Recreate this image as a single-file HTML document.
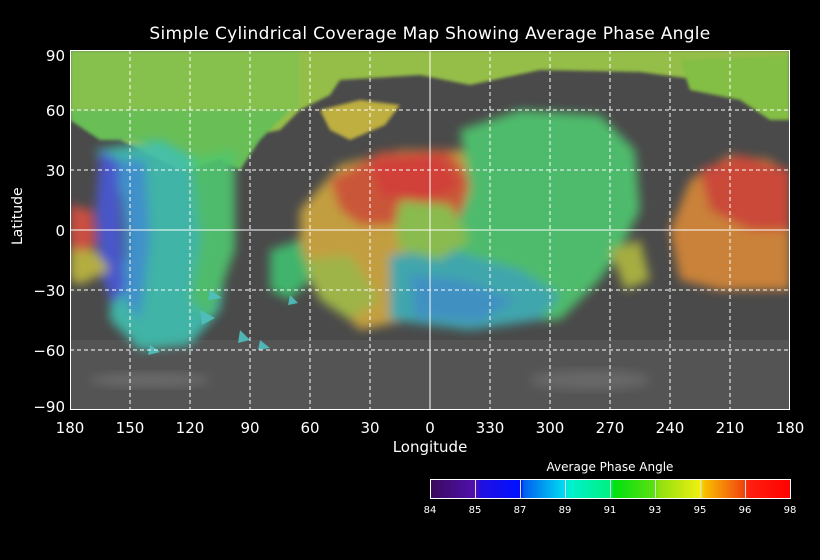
<!DOCTYPE html>
<html><head><style>
body{margin:0;background:#000;width:820px;height:560px;overflow:hidden;font-family:"DejaVu Sans","Liberation Sans",sans-serif;color:#fff}
.t{position:absolute;font-size:15px;white-space:nowrap}
.s{position:absolute;font-size:10px;white-space:nowrap;width:20px;text-align:center}
</style></head><body>
<div style="position:relative;width:820px;height:560px">
<div class="t" style="left:0;width:860px;text-align:center;top:24px;font-size:17px;letter-spacing:0.3px">Simple Cylindrical Coverage Map Showing Average Phase Angle</div>
<svg width="820" height="560" style="position:absolute;left:0;top:0">
<defs>
<filter id="b" x="-20%" y="-20%" width="140%" height="140%"><feGaussianBlur stdDeviation="5"/></filter>
<filter id="b2"><feGaussianBlur stdDeviation="1.5"/></filter>
<linearGradient id="cb" x1="0" x2="1">
<stop offset="0" stop-color="#3a0a5a"/><stop offset="0.125" stop-color="#5010b0"/>
<stop offset="0.14" stop-color="#2010e0"/><stop offset="0.25" stop-color="#0010ff"/>
<stop offset="0.26" stop-color="#0060f0"/><stop offset="0.375" stop-color="#00e0f0"/>
<stop offset="0.385" stop-color="#00f0d0"/><stop offset="0.5" stop-color="#00f080"/>
<stop offset="0.51" stop-color="#00e010"/><stop offset="0.625" stop-color="#60e010"/>
<stop offset="0.635" stop-color="#90e010"/><stop offset="0.75" stop-color="#f0f010"/>
<stop offset="0.76" stop-color="#f8c000"/><stop offset="0.875" stop-color="#f04010"/>
<stop offset="0.885" stop-color="#ff2010"/><stop offset="1" stop-color="#ff0000"/>
</linearGradient>
<clipPath id="c"><rect x="70" y="50" width="720" height="360"/></clipPath>
</defs>
<g clip-path="url(#c)">
<rect x="70" y="50" width="720" height="360" fill="#4a4a4a"/>
<rect x="70" y="340" width="720" height="70" fill="#545454"/>
<ellipse cx="590" cy="380" rx="60" ry="10" fill="#686868" filter="url(#b)"/>
<ellipse cx="150" cy="380" rx="60" ry="7" fill="#6a6a6a" filter="url(#b)"/>
<g filter="url(#b2)" opacity="0.92">
<path d="M70 50 H790 V75 L700 80 L640 72 L540 70 L470 85 L420 75 L340 80 L330 95 L300 110 L280 130 L230 140 L180 170 L120 140 L70 120 Z" fill="#9cc848"/>
<rect x="70" y="50" width="230" height="60" fill="#8ccc50"/>
<path d="M680 60 L790 55 V120 L770 120 L740 100 L690 90 Z" fill="#88c844"/>
<path d="M320 110 L360 100 L400 105 L385 125 L350 140 L330 130 Z" fill="#c8b840"/>
<path d="M70 110 L290 110 L260 140 L240 170 L220 160 L190 170 L140 140 L100 140 L70 120 Z" fill="#6cc858"/>
</g>
<g filter="url(#b)" opacity="0.9">
<path d="M95 150 L160 140 L220 170 L230 240 L220 310 L190 345 L140 350 L110 320 L110 290 L130 250 L125 200 Z" fill="#40c0b0"/>
<path d="M190 160 L235 150 L235 250 L210 320 L190 300 L200 240 Z" fill="#50c870"/>
<path d="M100 150 L118 160 L122 230 L125 290 L112 305 L100 270 L96 210 Z" fill="#4858d8"/>
<path d="M118 160 L145 160 L150 240 L140 320 L125 300 L125 230 Z" fill="#4098d8"/>
<path d="M70 205 L92 210 L96 240 L85 260 L70 260 Z" fill="#d85040"/>
<path d="M70 250 L95 250 L110 270 L80 285 L70 280 Z" fill="#c0b840"/>
<path d="M300 210 L340 165 L400 150 L460 150 L480 180 L470 240 L440 280 L410 320 L360 330 L330 300 L300 260 Z" fill="#d0a840"/>
<path d="M330 180 L380 152 L450 150 L470 180 L460 220 L400 225 L360 225 L340 210 Z" fill="#d85838"/>
<path d="M370 160 L440 155 L460 185 L420 205 L380 195 Z" fill="#e04038"/>
<path d="M300 260 L350 255 L380 300 L350 320 L320 300 Z" fill="#a8c048"/>
<path d="M460 130 L520 110 L600 115 L635 150 L640 210 L620 250 L600 280 L560 320 L480 320 L440 280 L450 240 L470 190 Z" fill="#50c870"/>
<path d="M390 255 L450 250 L520 270 L560 295 L540 320 L470 330 L390 320 Z" fill="#40b0b8"/>
<path d="M410 275 L460 280 L515 300 L480 322 L415 318 Z" fill="#4090d8" opacity="0.7"/>
<path d="M400 200 L450 205 L470 240 L440 260 L400 250 L395 225 Z" fill="#90c850"/>
<path d="M670 230 L690 180 L730 155 L770 160 L790 175 V290 L720 290 L680 280 Z" fill="#d88838"/>
<path d="M700 170 L740 155 L790 170 V230 L750 230 L710 210 Z" fill="#d84a38"/>
<path d="M610 250 L640 240 L650 280 L625 290 Z" fill="#b0b840"/>
<path d="M270 250 L300 240 L310 280 L290 300 L270 290 Z" fill="#40c070"/>
</g>
<g fill="#50c0c0" opacity="0.9">
<path d="M240 330 L250 340 L238 343Z"/><path d="M260 340 L270 348 L258 350Z"/><path d="M200 310 L215 318 L202 325Z"/><path d="M290 295 L298 303 L288 305Z"/>
<path d="M150 345 L160 352 L148 355Z"/><path d="M210 290 L222 298 L208 300Z"/>
</g>
</g>
<g stroke="#fff" stroke-width="1" fill="none">
<g stroke-dasharray="4,3">
<path d="M130 50V410M190 50V410M250 50V410M310 50V410M370 50V410M490 50V410M550 50V410M610 50V410M670 50V410M730 50V410"/>
<path d="M70 110H790M70 170H790M70 290H790M70 350H790"/>
</g>
<path d="M430 50V410M70 230H790"/>
<rect x="70.5" y="50.5" width="719" height="359"/>
</g>
<rect x="430.5" y="479.5" width="360" height="19" fill="url(#cb)" stroke="#fff"/>
<path d="M475.5 480V498M520.5 480V498M565.5 480V498M610.5 480V498M655.5 480V498M700.5 480V498M745.5 480V498" stroke="#ddd"/>
</svg>
<div class="t" style="left:35px;top:47px;width:30px;text-align:right">90</div>
<div class="t" style="left:35px;top:102px;width:30px;text-align:right">60</div>
<div class="t" style="left:35px;top:162px;width:30px;text-align:right">30</div>
<div class="t" style="left:35px;top:222px;width:30px;text-align:right">0</div>
<div class="t" style="left:25px;top:282px;width:40px;text-align:right">−30</div>
<div class="t" style="left:25px;top:342px;width:40px;text-align:right">−60</div>
<div class="t" style="left:25px;top:398px;width:40px;text-align:right">−90</div>
<div class="t" style="top:230px;transform:translate(0,-50%) rotate(-90deg);width:30px;text-align:center;left:3px;font-size:14px">Latitude</div>
<div style="position:absolute;top:419px;left:0;width:820px">
<span class="t" style="left:50px;width:40px;text-align:center">180</span>
<span class="t" style="left:110px;width:40px;text-align:center">150</span>
<span class="t" style="left:170px;width:40px;text-align:center">120</span>
<span class="t" style="left:230px;width:40px;text-align:center">90</span>
<span class="t" style="left:290px;width:40px;text-align:center">60</span>
<span class="t" style="left:350px;width:40px;text-align:center">30</span>
<span class="t" style="left:410px;width:40px;text-align:center">0</span>
<span class="t" style="left:470px;width:40px;text-align:center">330</span>
<span class="t" style="left:530px;width:40px;text-align:center">300</span>
<span class="t" style="left:590px;width:40px;text-align:center">270</span>
<span class="t" style="left:650px;width:40px;text-align:center">240</span>
<span class="t" style="left:710px;width:40px;text-align:center">210</span>
<span class="t" style="left:770px;width:40px;text-align:center">180</span>
</div>
<div class="t" style="left:380px;width:100px;text-align:center;top:438px">Longitude</div>
<div class="t" style="left:430px;width:360px;text-align:center;top:460px;font-size:12px">Average Phase Angle</div>
<div style="position:absolute;top:505px;left:0">
<span class="s" style="left:420px">84</span>
<span class="s" style="left:465px">85</span>
<span class="s" style="left:510px">87</span>
<span class="s" style="left:555px">89</span>
<span class="s" style="left:600px">91</span>
<span class="s" style="left:645px">93</span>
<span class="s" style="left:690px">95</span>
<span class="s" style="left:735px">96</span>
<span class="s" style="left:780px">98</span>
</div>
</div>
</body></html>
